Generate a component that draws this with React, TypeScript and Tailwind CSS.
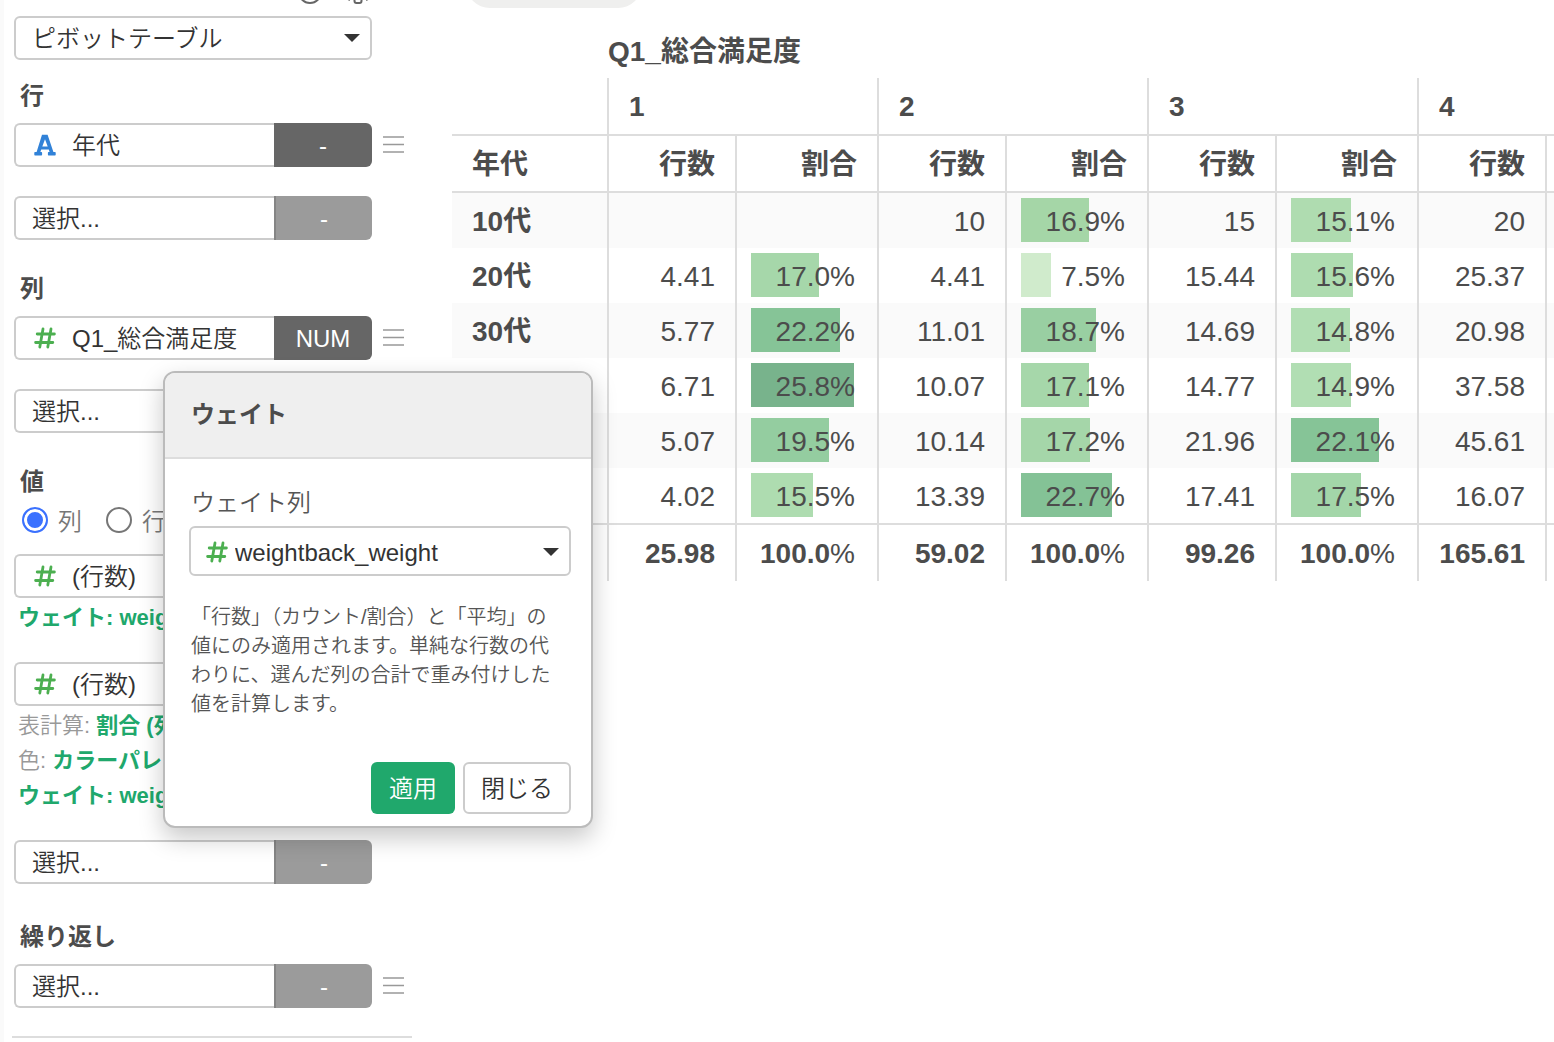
import React from 'react';

const CJK = "font-['Liberation_Sans','Noto_Sans_CJK_JP',sans-serif]";

function HashIcon() {
  return (
    <svg className="h-[22px] w-[22px] shrink-0" viewBox="0 0 22 22" fill="none" stroke="#4caf50" strokeWidth="2.8" strokeLinecap="round" aria-hidden="true">
      <path d="M9 2 5.800 20M17 2l-3.200 18M3.200 7H20.400M1.600 15.500H18.800" />
    </svg>
  );
}

function TextTypeIcon() {
  return (
    <svg className="h-[22px] w-[22px] shrink-0" viewBox="0 0 22 22" fill="#3182d8" aria-hidden="true">
      <path
        fillRule="evenodd"
        d="M8 .8h5.6l5.8 17.2H21a.7.7 0 0 1 .7.7v2a.7.7 0 0 1-.7.7h-6.400a.7.7 0 0 1-.7-.7v-2a.7.7 0 0 1 .7-.7h1l-.8-2.500H7.200L6.400 18h1a.7.7 0 0 1 .7.7v2a.7.7 0 0 1-.7.7H1a.7.7 0 0 1-.7-.7v-2A.7.7 0 0 1 1 18h1.600zM11 5.200 8.300 12.600h5.400z"
      />
    </svg>
  );
}

function MenuButton() {
  return (
    <button type="button" aria-label="メニュー" className="ml-[11px] h-[22px] w-[22px] shrink-0">
      <svg viewBox="0 0 22 22" className="h-full w-full" stroke="#999" strokeWidth="1.5" aria-hidden="true">
        <path d="M0 3h21M0 10.500h21M0 18h21" />
      </svg>
    </button>
  );
}

type FieldProps = {
  icon?: 'text' | 'num';
  label?: string;
  tag?: string;
  menu?: boolean;
};

function Field({ icon, label, tag = '-', menu }: FieldProps) {
  return (
    <div className="flex items-center">
      <div className="flex h-11 w-[358px] shrink-0">
        <button
          type="button"
          className={
            'flex h-11 flex-1 items-center rounded-l-md border-2 border-r-0 border-[#ccc] bg-white text-left text-[#333] ' +
            (icon ? 'gap-4 pl-[18px]' : 'pl-4')
          }
        >
          {icon === 'text' && <TextTypeIcon />}
          {icon === 'num' && <HashIcon />}
          <span className="pt-0.5">{label ?? '選択...'}</span>
        </button>
        <button
          type="button"
          className={
            'h-11 w-[98px] rounded-r-md pt-0.5 text-white ' +
            (icon ? 'bg-[#666]' : 'border-l-2 border-[#858585] bg-[#9b9b9b]')
          }
        >
          {tag}
        </button>
      </div>
      {menu && <MenuButton />}
    </div>
  );
}

function Heading({ children }: { children: React.ReactNode }) {
  return <h2 className="pl-1.5 text-2xl leading-8 font-bold text-[#4c4c4c]">{children}</h2>;
}

function Note({ name, children }: { name?: string; children: React.ReactNode }) {
  return (
    <p className="overflow-hidden pl-1 text-[22px] leading-[35px] whitespace-nowrap text-[#999]">
      {name}
      <a href="#" className="font-bold text-[#20a86c]">{children}</a>
    </p>
  );
}

function Caret() {
  return (
    <svg className="pointer-events-none h-2 w-4" viewBox="0 0 16 8" fill="#333" aria-hidden="true">
      <path d="M0 0h16L8 8z" />
    </svg>
  );
}

function Sidebar() {
  return (
    <aside className="w-[412px] shrink-0 border-l-4 border-[#fafafa] pl-2.5">
      <div className="flex h-4 items-start justify-end overflow-hidden pr-[38px]">
        <svg className="h-4 w-20" viewBox="0 0 80 16" fill="none" stroke="#666" strokeWidth="2" aria-hidden="true">
          <circle cx="16" cy="-8" r="11" />
          <path d="M60.500-4v5a2 2 0 0 0 2 2h3a2 2 0 0 0 2-2v-5M54-1l2 1M74-1l-2 1" />
        </svg>
      </div>

      <div className="relative w-[358px]">
        <select aria-label="チャートタイプ" className="h-11 w-full appearance-none rounded-md border-2 border-[#ccc] bg-white pt-0.5 pl-4 text-[#333]">
          <option>ピボットテーブル</option>
        </select>
        <span className="pointer-events-none absolute inset-y-0 right-3 flex items-center"><Caret /></span>
      </div>

      <section className="mt-5">
        <Heading>行</Heading>
        <div className="mt-[11px] flex flex-col gap-[29px]">
          <Field icon="text" label="年代" menu />
          <Field />
        </div>
      </section>

      <section className="mt-[33px]">
        <Heading>列</Heading>
        <div className="mt-[11px] flex flex-col gap-[29px]">
          <Field icon="num" label="Q1_総合満足度" tag="NUM" menu />
          <Field />
        </div>
      </section>

      <section className="mt-[33px]">
        <Heading>値</Heading>
        <div className="flex h-11 items-center gap-6 pl-2 text-[#777]">
          <label className="flex items-center gap-2.5">
            <input type="radio" name="axis" defaultChecked className="h-[26px] w-[26px] appearance-none rounded-full border-2 border-[#3b71fe] bg-[#3b71fe] shadow-[inset_0_0_0_3px_#fff]" />
            <span className="pt-1">列</span>
          </label>
          <label className="flex items-center gap-2.5">
            <input type="radio" name="axis" className="h-[26px] w-[26px] appearance-none rounded-full border-2 border-[#767676] bg-white" />
            <span className="pt-1">行</span>
          </label>
        </div>
        <div className="mt-3 flex flex-col">
          <Field icon="num" label="(行数)" />
          <div className="mt-0.5">
            <Note>ウェイト: weightback_weight</Note>
          </div>
        </div>
        <div className="mt-[27px] flex flex-col">
          <Field icon="num" label="(行数)" />
          <div className="mt-0.5">
            <Note name="表計算: ">割合 (列)</Note>
            <Note name="色: ">カラーパレット</Note>
            <Note>ウェイト: weightback_weight</Note>
          </div>
        </div>
        <div className="mt-[27px]">
          <Field />
        </div>
      </section>

      <section className="mt-[37px]">
        <Heading>繰り返し</Heading>
        <div className="mt-[11px]">
          <Field menu />
        </div>
      </section>
      <hr className="mt-7 -ml-0.5 border-t-2 border-[#ddd]" />
    </aside>
  );
}

type Share = [value: number, color: string] | null;
type Row = { name: string; counts: string[]; shares: Share[] };

const ROWS: Row[] = [
  { name: '10代', counts: ['', '10', '15', '20'], shares: [null, [16.9, '#a5d6a7'], [15.1, '#afdcb0']] },
  { name: '20代', counts: ['4.41', '4.41', '15.44', '25.37'], shares: [[17.0, '#a6d7aa'], [7.5, '#d0ebcc'], [15.6, '#aedcb0']] },
  { name: '30代', counts: ['5.77', '11.01', '14.69', '20.98'], shares: [[22.2, '#86c497'], [18.7, '#99cfa2'], [14.8, '#b1deb3']] },
  { name: '40代', counts: ['6.71', '10.07', '14.77', '37.58'], shares: [[25.8, '#78b38c'], [17.1, '#a6d7aa'], [14.9, '#b1deb3']] },
  { name: '50代', counts: ['5.07', '10.14', '21.96', '45.61'], shares: [[19.5, '#94cda0'], [17.2, '#a5d6a9'], [22.1, '#86c497']] },
  { name: '60代', counts: ['4.02', '13.39', '17.41', '16.07'], shares: [[15.5, '#aedcb0'], [22.7, '#84c296'], [17.5, '#a3d6a9']] },
];

const TOTALS = ['25.98', '59.02', '99.26', '165.61'];

const LINE = 'border-[#ddd]';

function PivotTable() {
  return (
    <table className="w-full table-fixed border-separate border-spacing-0 text-[28px] leading-[38px] text-[#4c4c4c]">
      <colgroup>
        <col className="w-[155px]" />
        {[0, 1, 2].map((i) => (
          <React.Fragment key={i}>
            <col className="w-32" />
            <col className="w-[142px]" />
          </React.Fragment>
        ))}
        <col className="w-32" />
        <col />
      </colgroup>
      <thead>
        <tr>
          <td className="h-[54px]" />
          <th colSpan={8} scope="colgroup" className="h-[54px] pt-0.5 pl-px text-left align-middle">Q1_総合満足度</th>
        </tr>
        <tr>
          <td className={`h-[58px] border-b-2 ${LINE}`} />
          {['1', '2', '3', '4'].map((n) => (
            <th key={n} colSpan={2} scope="colgroup" className={`h-[58px] border-b-2 border-l-2 pt-0.5 pl-5 text-left ${LINE}`}>{n}</th>
          ))}
        </tr>
        <tr>
          <th scope="col" className={`h-[57px] border-b-2 pt-0.5 pl-5 text-left ${LINE}`}>年代</th>
          {['1', '2', '3', '4'].map((n) => (
            <React.Fragment key={n}>
              <th scope="col" className={`h-[57px] border-b-2 border-l-2 pt-0.5 pr-5 text-right ${LINE}`}>行数</th>
              <th scope="col" className={`h-[57px] border-b-2 border-l-2 pt-0.5 text-right ${LINE} ${n === '4' ? '' : 'pr-5'}`}>{n === '4' ? '' : '割合'}</th>
            </React.Fragment>
          ))}
        </tr>
      </thead>
      <tbody>
        {ROWS.map((row) => (
          <tr key={row.name} className="odd:bg-[#fafafa]">
            <th scope="row" className="h-[55px] pt-0.5 pl-5 text-left">{row.name}</th>
            {row.counts.map((count, i) => {
              const share = row.shares[i];
              return (
                <React.Fragment key={i}>
                  <td className={`h-[55px] border-l-2 pt-0.5 pr-5 text-right ${LINE}`}>{count}</td>
                  <td className={`relative h-[55px] border-l-2 pt-0.5 text-right ${LINE} ${i === 3 ? '' : 'pr-[22px]'}`}>
                    {share && (
                      <>
                        <span className="absolute top-[5px] left-3.5 h-11" style={{ width: Math.round(share[0] * 4), backgroundColor: share[1] }} />
                        <span className="relative">{share[0].toFixed(1)}%</span>
                      </>
                    )}
                  </td>
                </React.Fragment>
              );
            })}
          </tr>
        ))}
      </tbody>
      <tfoot className="font-bold">
        <tr>
          <th scope="row" className={`h-[58px] border-t-2 pt-0.5 pl-5 text-left ${LINE}`}>合計</th>
          {TOTALS.map((total, i) => (
            <React.Fragment key={i}>
              <td className={`h-[58px] border-t-2 border-l-2 pt-0.5 pr-5 text-right ${LINE}`}>{total}</td>
              <td className={`h-[58px] border-t-2 border-l-2 pt-0.5 text-right ${LINE} ${i === 3 ? '' : 'pr-[22px]'}`}>
                {i < 3 && <>100.0<span className="font-normal">%</span></>}
              </td>
            </React.Fragment>
          ))}
        </tr>
      </tfoot>
    </table>
  );
}

function WeightDialog() {
  return (
    <div role="dialog" aria-labelledby="weight-title" className="absolute top-[371px] left-[163px] w-[430px] overflow-hidden rounded-xl border-2 border-[#bbb] bg-white shadow-[0_10px_24px_rgba(0,0,0,0.22)]">
      <h2 id="weight-title" className="h-[86px] border-b-2 border-[#ddd] bg-[#efefef] px-[26px] text-2xl leading-[84px] font-bold text-[#4c4c4c]">
        ウェイト
      </h2>
      <div className="flex flex-col pt-7 pr-5 pb-3 pl-6">
        <label htmlFor="weight-column" className="pl-0.5 leading-8 text-[#555]">ウェイト列</label>
        <div className="relative mt-[7px] text-[#333]">
          <span className="pointer-events-none absolute inset-0 flex items-center justify-between pt-0.5 pr-3 pl-[17px]">
            <HashIcon />
            <Caret />
          </span>
          <select id="weight-column" className="h-[50px] w-full appearance-none rounded-md border-2 border-[#ccc] bg-transparent pt-1 pl-11">
            <option>weightback_weight</option>
          </select>
        </div>
        <p className="mt-[27px] pr-4 pl-0.5 text-xl leading-[29px] text-[#555]">
          「行数」（カウント/割合）と「平均」の値にのみ適用されます。単純な行数の代わりに、選んだ列の合計で重み付けした値を計算します。
        </p>
        <div className="mt-[43px] flex justify-end gap-2">
          <button type="button" className="h-[52px] w-[84px] rounded-md bg-[#20a86c] pt-0.5 text-white">適用</button>
          <button type="button" className="h-[52px] w-[108px] rounded-md border-2 border-[#ccc] bg-white pt-0.5 text-[#333]">閉じる</button>
        </div>
      </div>
    </div>
  );
}

export default function App() {
  return (
    <div className={`relative flex min-h-screen overflow-hidden bg-white text-2xl font-[350] ${CJK}`}>
      <Sidebar />
      <main className="ml-10 min-w-0 flex-1">
        <div className="flex h-6 items-start overflow-hidden pl-3.5">
          <div className="-mt-10 h-12 w-44 rounded-full bg-[#efefee]" />
        </div>
        <PivotTable />
      </main>
      <WeightDialog />
    </div>
  );
}
